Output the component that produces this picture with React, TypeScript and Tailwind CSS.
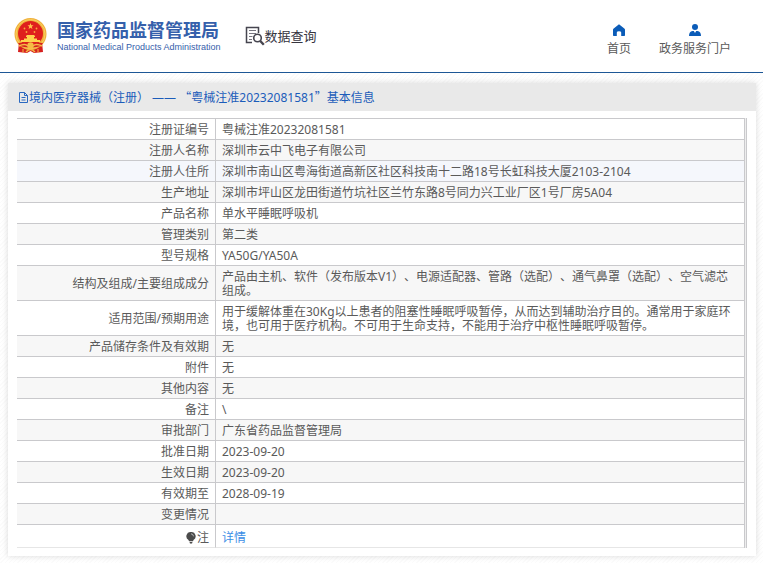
interface InfoRow {
  label: string;
  value: string;
  highlighted?: boolean;
}

const rows: InfoRow[] = [
  { label: '注册证编号', value: '粤械注准20232081581' },
  { label: '注册人名称', value: '深圳市云中飞电子有限公司' },
  {
    label: '注册人住所',
    value: '深圳市南山区粤海街道高新区社区科技南十二路18号长虹科技大厦2103-2104',
    highlighted: true,
  },
  {
    label: '生产地址',
    value: '深圳市坪山区龙田街道竹坑社区兰竹东路8号同力兴工业厂区1号厂房5A04',
  },
  { label: '产品名称', value: '单水平睡眠呼吸机' },
  { label: '管理类别', value: '第二类' },
  { label: '型号规格', value: 'YA50G/YA50A' },
  {
    label: '结构及组成/主要组成成分',
    value:
      '产品由主机、软件（发布版本V1）、电源适配器、管路（选配）、通气鼻罩（选配）、空气滤芯组成。',
  },
  {
    label: '适用范围/预期用途',
    value:
      '用于缓解体重在30Kg以上患者的阻塞性睡眠呼吸暂停，从而达到辅助治疗目的。通常用于家庭环境，也可用于医疗机构。不可用于生命支持，不能用于治疗中枢性睡眠呼吸暂停。',
  },
  { label: '产品储存条件及有效期', value: '无' },
  { label: '附件', value: '无' },
  { label: '其他内容', value: '无' },
  { label: '备注', value: '\\' },
  { label: '审批部门', value: '广东省药品监督管理局' },
  { label: '批准日期', value: '2023-09-20' },
  { label: '生效日期', value: '2023-09-20' },
  { label: '有效期至', value: '2028-09-19' },
  { label: '变更情况', value: '' },
];

function Emblem() {
  return (
    <svg viewBox="0 0 33 36" className="h-9 w-[33px] shrink-0" aria-hidden="true">
      <path d="M5 24 L28 24 L29 34 L20 35 L16.500 33 L13 35 L4 34 Z" fill="#d6201f" />
      <circle cx="16.500" cy="16" r="16" fill="#f0b13c" />
      <circle cx="16.500" cy="16" r="14.500" fill="none" stroke="#f9cf62" strokeWidth="1" />
      <circle cx="16.500" cy="15.500" r="12.500" fill="#df1f1d" />
      <path
        d="M16.500 5 L17.300 7.300 H19.500 L17.800 8.800 L18.400 11 L16.500 9.700 L14.600 11 L15.200 8.800 L13.500 7.300 H15.700 Z"
        fill="#ffc04a"
      />
      <g fill="#f9a83c">
        <circle cx="10.500" cy="10.500" r="0.900" />
        <circle cx="22.500" cy="10.500" r="0.900" />
        <circle cx="12.500" cy="14" r="0.900" />
        <circle cx="20.500" cy="14" r="0.900" />
      </g>
      <path
        d="M12 18 L13 17 H20 L21 18 V19 H20 V20.500 H23 V22 H26 V24 H7 V22 H10 V20.500 H13 V19 H12 Z"
        fill="#ffd24d"
      />
      <path d="M4 25 Q10 24 16.500 26 Q23 24 29 25 L27 28 Q16.500 31 6 28 Z" fill="#d6201f" />
      <circle cx="16.500" cy="27.500" r="3.200" fill="#f5bb45" />
      <path
        d="M5 28 Q11 25 14 28 M28 28 Q22 25 19 28 M12 34 Q16.500 29 21 34"
        fill="none"
        stroke="#f5bb45"
        strokeWidth="1.500"
      />
      <path d="M9 31 L9 34.500 M24 31 L24 34.500" stroke="#f5bb45" />
    </svg>
  );
}

function SearchDocIcon() {
  return (
    <svg viewBox="0 0 20 20" className="size-5 shrink-0" fill="none" stroke="#46454f" aria-hidden="true">
      <path d="M7 16.500 H1.500 V1.500 H13.500 V7" strokeWidth="1.500" />
      <path d="M4 4.500 H11 M4 7.500 H11 M4 10.500 H7.500 M4 13.500 H7" stroke="#777680" />
      <circle cx="12.500" cy="12" r="3.800" strokeWidth="1.600" />
      <path d="M15.300 15 L18.800 18.800" strokeWidth="2.400" />
    </svg>
  );
}

function HomeIcon() {
  return (
    <svg viewBox="0 0 12 12" className="size-3" fill="#0b5cb8" aria-hidden="true">
      <path d="M6 0.300 L11.600 4.800 Q12 5.200 12 5.700 V11.300 Q12 12 11.300 12 H8.200 V8.500 Q8.200 7.200 6 7.200 Q3.800 7.200 3.800 8.500 V12 H0.700 Q0 12 0 11.300 V5.700 Q0 5.200 0.400 4.800 Z" />
    </svg>
  );
}

function UserIcon() {
  return (
    <svg viewBox="0 0 12 12" className="size-3" fill="#0b5cb8" aria-hidden="true">
      <circle cx="6" cy="3" r="3" />
      <path d="M3.500 7 H4.800 L6 9 L7.200 7 H8.500 Q12 7.500 12 12 H0 Q0 7.500 3.500 7 Z" />
    </svg>
  );
}

function FileIcon() {
  return (
    <svg viewBox="0 0 11 12" className="h-3 w-[11px] shrink-0" fill="none" stroke="#2a68c0" aria-hidden="true">
      <path d="M1.500 0.500 H6.500 L9.500 3.500 V10.500 H1.500 Z M6.500 0.500 V3.500 H9.500 M3.500 5.500 H7.500 M3.500 8 H7.500" />
    </svg>
  );
}

function BulbIcon() {
  return (
    <svg viewBox="0 0 10 12" className="h-3 w-[10px]" fill="#4b4b4b" aria-hidden="true">
      <path d="M5 0 A4.300 4.300 0 0 1 7.500 8 L7 9.300 H3 L2.500 8 A4.300 4.300 0 0 1 5 0 Z" />
      <path d="M3.500 10 H6.500 L6 11.500 H4 Z" />
      <path d="M5 1.800 Q7.300 2 7.500 4.300" fill="none" stroke="#d0d0d0" strokeWidth="0.800" />
    </svg>
  );
}

export default function App() {
  return (
    <div className="min-h-screen bg-[repeating-linear-gradient(135deg,#ffffff_0px,#ffffff_2px,#fbfbfb_2px,#fbfbfb_3px)] pb-2 font-['Noto_Sans','Noto_Sans_CJK_SC',sans-serif] text-xs text-[#5a5a5a] [text-spacing-trim:space-all]">
      <header className="flex h-[73px] items-start justify-between border-b border-[#1d5796] bg-white pr-8 pl-[14px]">
        <div className="flex items-center pt-[18px]">
          <Emblem />
          <div className="ml-[10px] text-[#3560ab]">
            <h1 className="text-[18px] leading-[22px] font-bold whitespace-nowrap">
              国家药品监督管理局
            </h1>
            <p className="font-['Liberation_Sans',sans-serif] text-[9px] leading-3 whitespace-nowrap">
              National Medical Products Administration
            </p>
          </div>
          <div className="ml-6 flex items-center">
            <SearchDocIcon />
            <span className="text-[13px] leading-5 whitespace-nowrap text-[#36353f]">
              数据查询
            </span>
          </div>
        </div>
        <nav className="flex gap-7 pt-6">
          <a href="#" className="flex flex-col items-center gap-[5px] leading-4">
            <HomeIcon />
            首页
          </a>
          <a href="#" className="flex flex-col items-center gap-[5px] leading-4">
            <UserIcon />
            政务服务门户
          </a>
        </nav>
      </header>

      <main className="mt-[10px] mr-[7px] ml-2 bg-white pb-2 shadow-[0_0_6px_rgba(0,0,0,0.15)]">
        <h2 className="flex h-7 items-center bg-[#e9e9e9] px-[10px] pt-px text-[#1b5cba]">
          <FileIcon />
          <span>
            境内医疗器械（注册） ——{' '}
            <span className="font-['Noto_Sans_CJK_SC',sans-serif]">“</span>
            粤械注准20232081581
            <span className="font-['Noto_Sans_CJK_SC',sans-serif]">”</span>
            基本信息
          </span>
        </h2>
        <div className="mx-[9px] mt-[7px] border-r border-[#c9c9cc] bg-[#ededed] pr-px">
          <table className="w-full border-separate border-spacing-0 border-t border-r border-[#c9c9cc] bg-white leading-[14px]">
            <tbody>
              {rows.map((row) => (
                <tr
                  key={row.label}
                  className={row.highlighted ? 'bg-[#f5f7fc]' : 'even:bg-[#f7f7f7]'}
                >
                  <th
                    scope="row"
                    className="w-[199px] border-r border-b border-[#c9c9cc] pt-1 pr-[6px] pb-[2px] text-right font-normal"
                  >
                    {row.label}
                  </th>
                  <td className="border-b border-[#c9c9cc] px-[6px] pt-1 pb-[2px]">
                    {row.value}
                  </td>
                </tr>
              ))}
              <tr>
                <th
                  scope="row"
                  className="h-[23px] border-r border-b border-r-[#c9c9cc] border-b-[#e6e6e6] pt-[3px] pr-[6px] font-normal"
                >
                  <span className="flex items-center justify-end gap-px">
                    <BulbIcon />注
                  </span>
                </th>
                <td className="border-b border-[#e6e6e6] px-[6px] pt-1">
                  <a href="#" className="text-[#3c8ee6]">
                    详情
                  </a>
                </td>
              </tr>
            </tbody>
          </table>
        </div>
      </main>
    </div>
  );
}
